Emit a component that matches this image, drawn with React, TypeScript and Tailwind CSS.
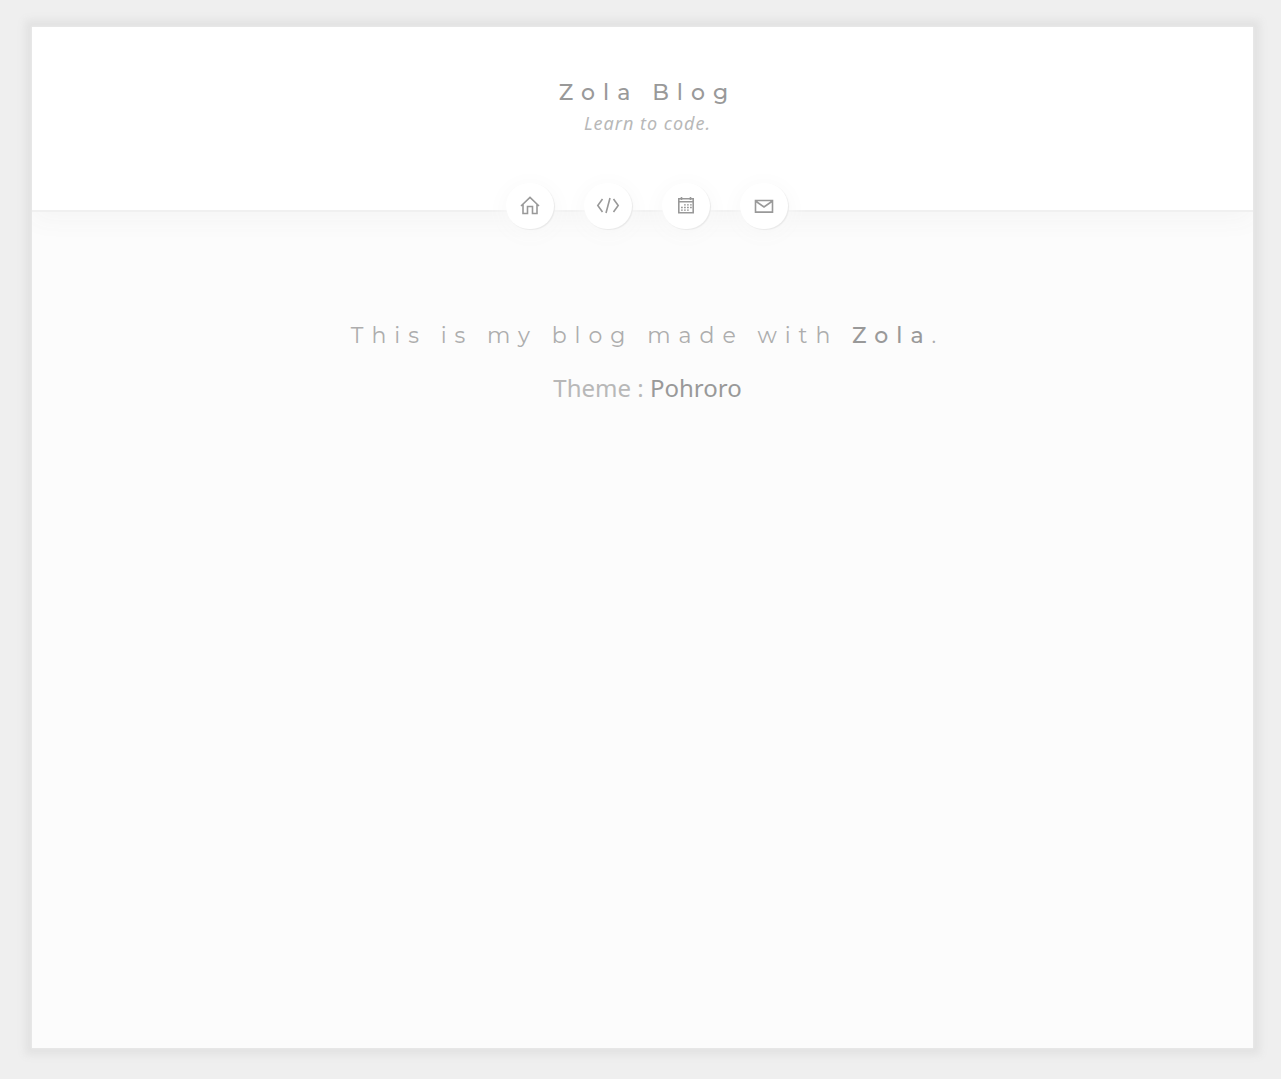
import type { ReactNode } from "react";

const strokeProps = {
  width: 24,
  height: 24,
  viewBox: "0 0 24 24",
  fill: "none",
  stroke: "currentColor",
  strokeWidth: 1.6,
  "aria-hidden": true,
} as const;

function HomeIcon() {
  return (
    <svg {...strokeProps}>
      <path d="M3 12 12 3.4l9 8.6M5 10.5v9h4.5v-7h5v7H19v-9" />
    </svg>
  );
}

function CodeIcon() {
  return (
    <svg {...strokeProps}>
      <path d="M6.5 5 1.8 11.5 6.5 18M17.5 5l4.7 6.5-4.7 6.5M14 4 10 19" />
    </svg>
  );
}

function CalendarIcon() {
  return (
    <svg {...strokeProps}>
      <path d="M4.8 4.7h14.4v14H4.8zM4.8 7.7h14.4" />
      <path d="M7.5 3v3M16.5 3v3" />
      <path d="M10 10.8h8M7 13.5h11M7 16.2h8" strokeWidth="1.3" strokeDasharray="1.8 1.2" />
    </svg>
  );
}

function MailIcon() {
  return (
    <svg {...strokeProps}>
      <path d="M3.5 6.5h17v11.6h-17zM3.5 7l8.5 6L20.5 7" />
    </svg>
  );
}

const links: { label: string; href: string; icon: ReactNode }[] = [
  { label: "Home", href: "#home", icon: <HomeIcon /> },
  { label: "Posts", href: "#posts", icon: <CodeIcon /> },
  { label: "Archive", href: "#archive", icon: <CalendarIcon /> },
  { label: "Contact", href: "#contact", icon: <MailIcon /> },
];

export default function App() {
  return (
    <div className="flex min-h-screen flex-col bg-[#efefef] pt-[27px] pr-7 pb-[31px] pl-8 font-['Noto_Sans',sans-serif] text-[#b8b8b8]">
      <div className="flex grow flex-col overflow-hidden bg-[#fcfcfc] shadow-[0_0_2px_1px_#e9e9e9,0_0_8px_7px_#e2e2e2]">
        <header className="flex flex-col items-center border-b-2 border-[#f0f0f0] bg-white pt-[50px] shadow-[0_8px_24px_#f5f5f5]">
          <h1 className="pl-2.5 font-['Montserrat','Inter',sans-serif] text-[22px] leading-8 font-medium tracking-[8px] text-[#999]">
            <a href="#home">Zola Blog</a>
          </h1>
          <p className="pl-2.5 text-[18px] leading-7 tracking-[1px] italic">Learn to code.</p>
          <nav aria-label="Main" className="-mb-[19px] flex gap-[30px] pt-[46px] pl-2">
            {links.map((link) => (
              <a
                key={link.label}
                href={link.href}
                aria-label={link.label}
                className="flex h-[46px] w-12 items-center justify-center rounded-full bg-white text-[#999] shadow-[1px_1px_1px_#e9e9e9,0_4px_20px_4px_#f9f9f9]"
              >
                {link.icon}
              </a>
            ))}
          </nav>
        </header>
        <main className="flex flex-col items-center pt-[106px] pl-2.5 text-center">
          <h2 className="font-['Montserrat','Inter',sans-serif] text-[22px] leading-9 tracking-[8px] text-[#adadad]">
            This is my blog made with{" "}
            <a href="#zola" className="font-medium text-[#999]">
              Zola
            </a>
            .
          </h2>
          <p className="pt-4 text-2xl leading-9">
            Theme :{" "}
            <a href="#pohroro" className="text-[#999]">
              Pohroro
            </a>
          </p>
        </main>
      </div>
    </div>
  );
}
